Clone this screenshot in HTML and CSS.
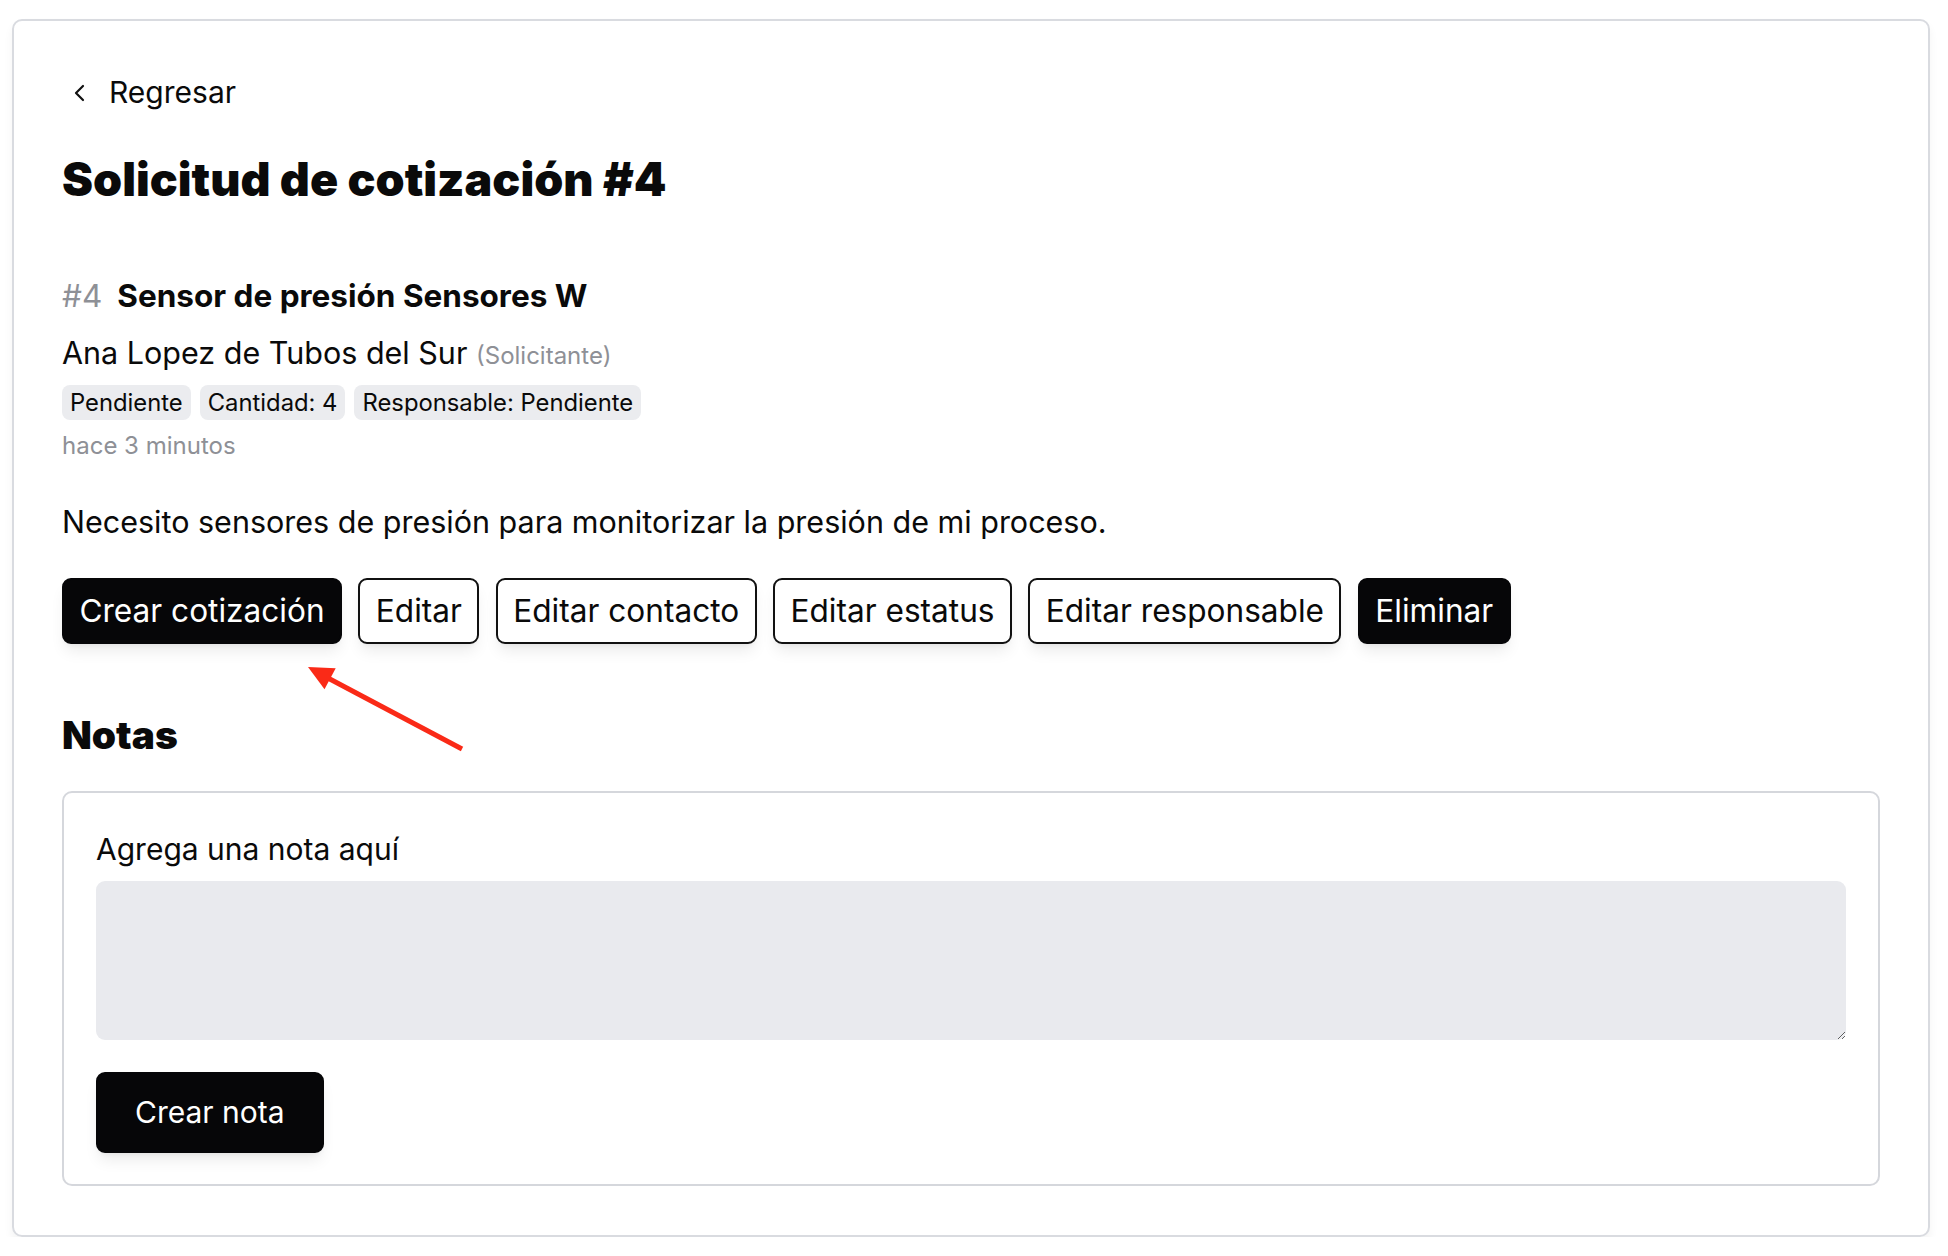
FILE: index.html
```html
<!DOCTYPE html>
<html lang="es">
<head>
<meta charset="utf-8">
<title>Solicitud de cotización #4</title>
<link rel="stylesheet" href="styles.css">
</head>
<body>
<main class="card">
  <a class="back" href="#">
    <svg class="chev" width="14" height="20" viewBox="0 0 14 20"><polyline points="10,3 3,10 10,17" fill="none" stroke="#111" stroke-width="2.2" stroke-linecap="round" stroke-linejoin="round"/></svg>
    <span>Regresar</span>
  </a>
  <h1 class="title">Solicitud de cotización #4</h1>

  <section class="request">
    <h2 class="req-title"><span class="req-id">#4</span>Sensor de presión Sensores W</h2>
    <p class="contact">Ana Lopez de Tubos del Sur <span class="role">(Solicitante)</span></p>
    <div class="badges">
      <span class="badge">Pendiente</span>
      <span class="badge">Cantidad: 4</span>
      <span class="badge">Responsable: Pendiente</span>
    </div>
    <p class="time">hace 3 minutos</p>
    <p class="desc">Necesito sensores de presión para monitorizar la presión de mi proceso.</p>
    <div class="actions">
      <button class="btn btn-dark">Crear cotización</button>
      <button class="btn btn-outline">Editar</button>
      <button class="btn btn-outline">Editar contacto</button>
      <button class="btn btn-outline">Editar estatus</button>
      <button class="btn btn-outline">Editar responsable</button>
      <button class="btn btn-dark">Eliminar</button>
      <svg class="arrow" width="175" height="100" viewBox="0 0 175 100">
        <line x1="164" y1="92" x2="28" y2="20" stroke="#fa2a17" stroke-width="5"/>
        <polygon points="10,10 37.7,11.2 26.5,32.3" fill="#fa2a17"/>
      </svg>
    </div>
  </section>

  <h2 class="notes-title">Notas</h2>
  <form class="notes">
    <label class="notes-label" for="nota">Agrega una nota aquí</label>
    <textarea id="nota" class="notes-input"></textarea>
    <div><button type="button" class="btn btn-dark btn-note">Crear nota</button></div>
  </form>
</main>
</body>
</html>
```

FILE: styles.css
```css
* { box-sizing: border-box; }
html, body { margin: 0; padding: 0; background: #fff; }
body {
  font-family: Inter, "Noto Sans", "Liberation Sans", sans-serif;
  color: #0a0a0a;
}
.card {
  width: 1918px;
  height: 1218px;
  margin: 19px 0 0 12px;
  border: 2px solid #d9dbe0;
  border-radius: 10px;
  padding: 49px 48px;
  box-shadow: 0 6px 10px rgba(0,0,0,0.05);
  position: relative;
}
.back {
  display: flex;
  align-items: center;
  gap: 22px;
  color: #0a0a0a;
  text-decoration: none;
  font-size: 30px;
  line-height: 45px;
  padding-left: 11px;
}
.chev { display: block; }
.title {
  margin: 39px 0 0;
  font-size: 46.6px;
  line-height: 50px;
  font-weight: 900;
}
.request { margin-top: 72px; }
.req-title {
  margin: 0;
  font-size: 31.5px;
  line-height: 40px;
  font-weight: 700;
}
.req-id { color: #8e9096; font-weight: 400; margin-right: 15px; }
.contact {
  margin: 13.5px 0 0;
  font-size: 30.5px;
  line-height: 45px;
}
.role { font-size: 24px; color: #8e9096; }
.badges {
  display: flex;
  gap: 9px;
  margin-top: 7px;
}
.badge {
  background: #ebecef;
  border-radius: 8px;
  font-size: 23.8px;
  line-height: 35px;
  padding: 0 8px;
}
.time {
  margin: 11px 0 0;
  font-size: 24px;
  line-height: 30px;
  color: #8e9096;
}
.desc {
  margin: 38px 0 0;
  font-size: 30.5px;
  line-height: 45px;
}
.actions {
  display: flex;
  gap: 16.5px;
  margin-top: 34px;
  position: relative;
}
.btn {
  font-family: inherit;
  font-size: 31.6px;
  line-height: 40px;
  height: 66px;
  padding: 0 15.4px;
  border-radius: 9px;
  cursor: pointer;
  box-shadow: 0 10px 15px -3px rgba(0,0,0,0.08), 0 4px 6px -4px rgba(0,0,0,0.08);
}
.btn-dark { background: #060608; color: #fff; border: 2px solid #060608; }
.btn-outline { background: #fff; color: #0a0a0a; border: 2px solid #111; }
.arrow {
  position: absolute;
  left: 236px;
  top: 79px;
}
.notes-title {
  margin: 68px 0 0;
  font-size: 38.8px;
  line-height: 45px;
  font-weight: 900;
}
.notes {
  margin-top: 34.5px;
  border: 2px solid #d5d7dc;
  border-radius: 10px;
  padding: 34px 32px 31px;
}
.notes-label {
  display: block;
  font-size: 30px;
  line-height: 45px;
}
.notes-input {
  display: block;
  width: 100%;
  height: 159px;
  margin-top: 8.5px;
  background: #e9eaee;
  border: none;
  border-radius: 9px;
  resize: vertical;
  font-family: inherit;
  font-size: 25px;
}
.btn-note {
  margin-top: 32px;
  height: 81px;
  padding: 0 37px;
  font-size: 30px;
}
```
